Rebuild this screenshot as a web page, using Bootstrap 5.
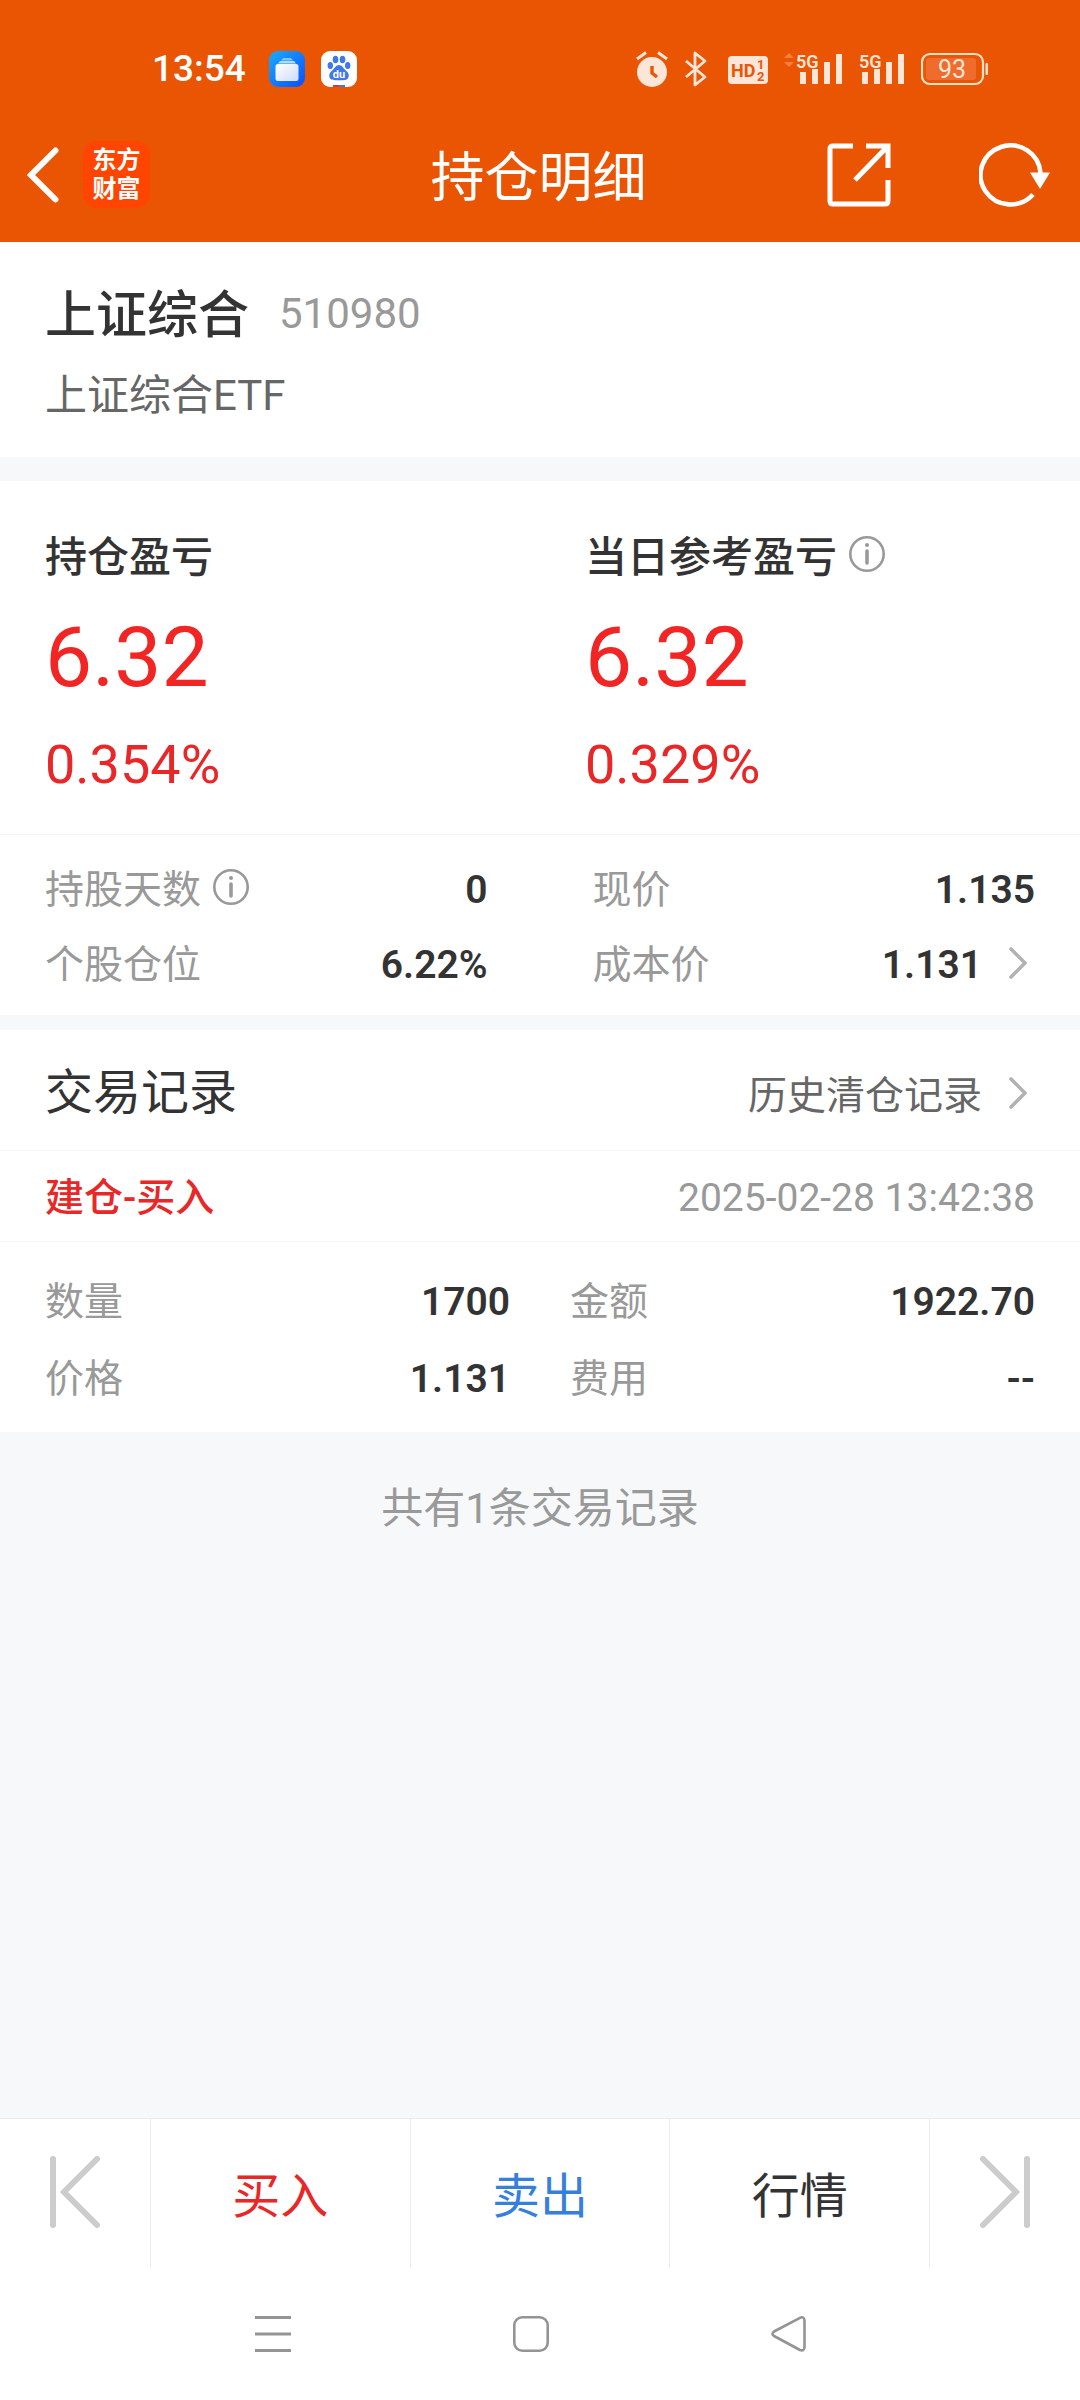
<!DOCTYPE html>
<html lang="zh-CN">
<head>
<meta charset="utf-8">
<meta name="viewport" content="width=device-width, initial-scale=1">
<title>持仓明细</title>
<link rel="stylesheet" href="https://cdn.jsdelivr.net/npm/bootstrap@5.3.0/dist/css/bootstrap.min.css">
<style>
  :root { --brand: #ea5504; --ink: #333; --soft: #666; --mute: #999; --up: #e82828; --down: #3680dc; --pane: #f7f8fa; --rule: #f5f5f5; }
  body { font-family: Roboto, "Noto Sans CJK SC", sans-serif; color: var(--ink); background: var(--pane); font-size: 39px; line-height: 60px; }
  svg { display: block; flex: none; }
  a { color: inherit; text-decoration: none; }
  button { color: inherit; }
  .brand-bg { background: var(--brand); }
  .ink-soft { color: var(--soft); }
  .ink-mute { color: var(--mute); }
  .ink-up { color: var(--up); }
  .ink-down { color: var(--down); }
  .figure-strong { font-weight: 600; }
  .status-strip { height: 110px; padding: 28px 92px 0 152px; }
  .clock { font-size: 37px; font-weight: 500; line-height: 42px; margin-right: 7px; }
  .status-group { gap: 16px; }
  .title-strip { height: 132px; padding: 0 30px 3px 27px; }
  .side { flex: 1 1 0; }
  .app-logo { width: 67px; height: 67px; border-radius: 14px; background: #ff4500; font-size: 24px; font-weight: 700; line-height: 29px; }
  .page-title { font-size: 54px; font-weight: 400; padding-top: 9px; line-height: 60px; }
  .pad-x { padding-left: 45px; padding-right: 45px; }
  .security { padding-top: 44px; padding-bottom: 36px; margin-bottom: 24px; }
  .security h2 { font-size: 51px; font-weight: 500; line-height: 60px; }
  .code { font-size: 42px; line-height: 56px; margin-left: 30px; }
  .fullname { font-size: 42px; line-height: 50px; margin-top: 25px; }
  .profit { padding: 47px 0 39px; border-bottom: 1px solid var(--rule); }
  .profit-cell { padding-left: 45px; }
  .profit h3 { font-size: 42px; font-weight: 500; line-height: 60px; }
  .amount { font-size: 84px; line-height: 84px; margin-top: 28px; color: #f12524; }
  .percent { font-size: 54px; line-height: 60px; margin-top: 35px; }
  .info-btn { margin-left: 12px; }
  .pairs { display: grid; grid-template-columns: 1fr 1fr; }
  .holding { column-gap: 105px; line-height: 75px; padding-top: 18px; padding-bottom: 12px; margin-bottom: 15px; }
  .deal { column-gap: 60px; line-height: 77px; padding-top: 22px; padding-bottom: 14px; }
  .go { gap: 27px; padding-right: 8px; }
  .go svg { margin-bottom: 6px; }
  .records-head { padding-top: 33px; padding-bottom: 24px; border-bottom: 1px solid var(--rule); }
  .records-head h3 { font-size: 48px; font-weight: 400; line-height: 60px; }
  .deal-head { padding-top: 4px; line-height: 86px; border-bottom: 1px solid var(--rule); }
  .deal-kind { font-weight: 500; }
  .total { font-size: 42px; padding-top: 47px; }
  .actions { height: 150px; border-top: 1px solid #ebebeb; }
  .actions button { background: none; font-size: 48px; line-height: 60px; padding: 6px 0 0; border-width: 0; }
  .actions button + button { border-left: 1px solid #ebebeb; }
  .actions .edge { width: 150px; padding: 0 0 4px; }
  .actions .last { width: 151px; }
  .system-nav { height: 132px; padding: 0 162px 0 144px; }
</style>
</head>
<body>
<div class="d-flex flex-column min-vh-100">
  <header class="brand-bg text-white">
    <div class="status-strip d-flex justify-content-between align-items-center">
      <div class="status-group d-flex align-items-center">
        <span class="clock">13:54</span>
        <svg width="36" height="36" viewBox="0 0 36 36" aria-hidden="true">
          <defs>
            <linearGradient id="blue" x1="0" y1="0" x2="1" y2="1"><stop offset="0" stop-color="#18adff"/><stop offset="1" stop-color="#0c4dff"/></linearGradient>
            <linearGradient id="card" x1="0" y1="0" x2="1" y2="1"><stop offset="0" stop-color="#fff"/><stop offset="1" stop-color="#cfdcff"/></linearGradient>
          </defs>
          <rect width="36" height="36" rx="9" fill="url(#blue)"/>
          <path d="M14 7h8l2 2.500H12z" fill="#7fc4ff"/><path d="M11 10h14l2 2.500H9z" fill="#b5dcff"/>
          <rect x="6.500" y="13" width="23" height="17" rx="2.500" fill="url(#card)"/>
        </svg>
        <svg width="36" height="36" viewBox="0 0 36 36" aria-hidden="true">
          <rect width="36" height="36" rx="9" fill="#fff"/>
          <g fill="#3f78e8"><ellipse cx="14.500" cy="8.500" rx="2.800" ry="3.800"/><ellipse cx="21.500" cy="8.500" rx="2.800" ry="3.800"/><ellipse cx="9.300" cy="14.500" rx="2.700" ry="3.500"/><ellipse cx="26.700" cy="14.500" rx="2.700" ry="3.500"/>
          <path d="M18 14c3 0 4 3 6.500 5.200 2.500 2.100 4 4 3 7-1 3-4 3-9.500 3s-8.500 0-9.500-3c-1-3 .5-4.900 3-7C14 17 15 14 18 14z"/></g>
          <text x="18" y="27" font-size="11" font-weight="700" fill="#fff" text-anchor="middle">du</text>
          <rect x="12" y="34" width="6" height="2" fill="#e03040"/><rect x="18" y="34" width="6" height="2" fill="#3f78e8"/>
        </svg>
      </div>
      <div class="status-group d-flex align-items-center">
        <svg width="32" height="36" viewBox="0 0 32 36" fill="none" stroke="#fde5d8" aria-hidden="true">
          <circle cx="16" cy="21" r="15" fill="#fde5d8" stroke="none"/><path d="M1 8l9-6.500M31 8l-9-6.500" stroke-width="3"/><path d="M16 15v7l5 4" stroke="#ea5504" stroke-width="3.400"/>
        </svg>
        <svg width="27" height="36" viewBox="0 0 27 36" fill="none" stroke="#fde5d8" stroke-width="2.800" stroke-linejoin="round" aria-hidden="true"><path d="M2 10l19 16-10 8V2l10 8L2 26"/></svg>
        <svg width="41" height="36" viewBox="0 0 41 36" aria-hidden="true">
          <rect x="1" y="5" width="40" height="28" rx="4" fill="#fde5d8"/>
          <g fill="#ea5504" font-weight="700"><text x="4" y="26" font-size="18">HD</text><text x="30" y="18" font-size="13">1</text><text x="30" y="30" font-size="13">2</text></g>
        </svg>
        <svg width="59" height="36" viewBox="0 0 59 36" fill="#fde5d8" aria-hidden="true">
          <path d="M0 7l5-5 5 5zM0 11h10l-5 5z" fill="#f5803e"/>
          <text x="12" y="17" font-size="18" font-weight="600">5G</text>
          <path d="M16 21h6v12h-6zM28 18h6v15h-6zM40 11h6v22h-6zM52 3h6v30h-6z"/>
        </svg>
        <svg width="46" height="36" viewBox="0 0 46 36" fill="#fde5d8" aria-hidden="true">
          <text x="0" y="17" font-size="18" font-weight="600">5G</text>
          <path d="M3 21h6v12H3zM15 18h6v15h-6zM27 11h6v22h-6zM39 3h6v30h-6z"/>
        </svg>
        <svg width="67" height="36" viewBox="0 0 67 36" aria-hidden="true">
          <rect x="1" y="3" width="61" height="30" rx="8" fill="none" stroke="#fde0c8" stroke-width="2.200"/>
          <rect x="5" y="7" width="50" height="22" rx="3" fill="#f06c2c"/><rect x="64.500" y="12" width="2.500" height="12" rx="1" fill="#fde0c8"/>
          <text x="31" y="27" font-size="25" fill="#fde5d8" text-anchor="middle">93</text>
        </svg>
      </div>
    </div>
    <nav class="title-strip d-flex align-items-center" aria-label="顶部导航">
      <div class="side d-flex align-items-center gap-4">
        <button type="button" class="btn p-0 border-0" aria-label="返回">
          <svg width="32" height="56" viewBox="0 0 32 56" fill="none" stroke="#fff" stroke-width="6" stroke-linecap="round"><path d="M28.500 3.500L4 28l24.500 24.500"/></svg>
        </button>
        <a href="#" class="app-logo d-flex align-items-center justify-content-center text-center">东方<br>财富</a>
      </div>
      <h1 class="page-title mb-0">持仓明细</h1>
      <div class="side d-flex align-items-center justify-content-end">
        <button type="button" class="btn p-0 border-0 me-4" aria-label="分享">
          <svg width="64" height="64" viewBox="0 0 64 64" fill="none" stroke="#fff" stroke-width="5"><path d="M26 3H6Q3 3 3 6v52q0 3 3 3h52q3 0 3-3V37M39 3h22v22M61 3L28 37"/></svg>
        </button>
        <button type="button" class="btn p-0 border-0 ms-3 ps-5" aria-label="刷新">
          <svg width="71" height="64" viewBox="0 0 71 64" fill="none" stroke="#fff" stroke-width="4.600"><path d="M61.500 30A30 29.500 0 1 0 54 51.500"/><path d="M51 29.500h20L61 46z" fill="#fff" stroke="none"/></svg>
        </button>
      </div>
    </nav>
  </header>

  <main class="flex-grow-1">
    <section class="security pad-x bg-white">
      <div class="d-flex align-items-start">
        <h2 class="mb-0">上证综合</h2>
        <span class="code ink-mute">510980</span>
      </div>
      <div class="fullname ink-soft">上证综合ETF</div>
    </section>

    <section class="profit row g-0 bg-white">
      <div class="profit-cell col-6">
        <h3 class="mb-0">持仓盈亏</h3>
        <div class="amount">6.32</div>
        <div class="percent ink-up">0.354%</div>
      </div>
      <div class="profit-cell col-6">
        <div class="d-flex align-items-center">
          <h3 class="mb-0">当日参考盈亏</h3>
          <button type="button" class="btn p-0 border-0 info-btn pb-2" aria-label="说明">
            <svg width="36" height="36" viewBox="0 0 36 36" fill="none" stroke="#999" stroke-width="2.600"><circle cx="18" cy="18" r="16.700"/><path d="M18 15v12" stroke-width="3.600" stroke-linecap="round"/><circle cx="18" cy="9" r="2" fill="#999" stroke="none"/></svg>
          </button>
        </div>
        <div class="amount">6.32</div>
        <div class="percent ink-up">0.329%</div>
      </div>
    </section>

    <section class="holding pairs pad-x bg-white">
      <div class="d-flex justify-content-between">
        <span class="ink-mute d-flex align-items-center">持股天数
          <button type="button" class="btn p-0 border-0 info-btn pb-2" aria-label="说明">
            <svg width="36" height="36" viewBox="0 0 36 36" fill="none" stroke="#999" stroke-width="2.600"><circle cx="18" cy="18" r="16.700"/><path d="M18 15v12" stroke-width="3.600" stroke-linecap="round"/><circle cx="18" cy="9" r="2" fill="#999" stroke="none"/></svg>
          </button>
        </span>
        <span class="figure-strong">0</span>
      </div>
      <div class="d-flex justify-content-between"><span class="ink-mute">现价</span><span class="figure-strong">1.135</span></div>
      <div class="d-flex justify-content-between"><span class="ink-mute">个股仓位</span><span class="figure-strong">6.22%</span></div>
      <a href="#" class="d-flex justify-content-between"><span class="ink-mute">成本价</span>
        <span class="go d-flex align-items-center figure-strong">1.131
          <svg width="18" height="32" viewBox="0 0 18 32" fill="none" stroke="#b2b2b2" stroke-width="3.600" stroke-linecap="round"><path d="M2 2l14 14L2 30"/></svg>
        </span>
      </a>
    </section>

    <section class="bg-white">
      <div class="records-head pad-x d-flex justify-content-between align-items-baseline">
        <h3 class="mb-0">交易记录</h3>
        <a href="#" class="go d-flex align-items-center ink-soft">历史清仓记录
          <svg width="18" height="32" viewBox="0 0 18 32" fill="none" stroke="#b2b2b2" stroke-width="3.600" stroke-linecap="round"><path d="M2 2l14 14L2 30"/></svg>
        </a>
      </div>
      <div class="deal-head pad-x d-flex justify-content-between">
        <span class="deal-kind ink-up">建仓-买入</span>
        <time class="ink-mute" datetime="2025-02-28T13:42:38">2025-02-28 13:42:38</time>
      </div>
      <div class="deal pairs pad-x">
        <div class="d-flex justify-content-between"><span class="ink-mute">数量</span><span class="figure-strong">1700</span></div>
        <div class="d-flex justify-content-between"><span class="ink-mute">金额</span><span class="figure-strong">1922.70</span></div>
        <div class="d-flex justify-content-between"><span class="ink-mute">价格</span><span class="figure-strong">1.131</span></div>
        <div class="d-flex justify-content-between"><span class="ink-mute">费用</span><span class="figure-strong">--</span></div>
      </div>
    </section>
    <p class="total text-center ink-mute mb-0">共有1条交易记录</p>
  </main>

  <footer class="bg-white">
    <div class="actions d-flex">
      <button type="button" class="edge d-flex align-items-center justify-content-center" aria-label="上一只">
        <svg width="50" height="72" viewBox="0 0 50 72" fill="none" stroke="#ccc" stroke-width="6" stroke-linecap="round"><path d="M3 3v66M47 3L14 36l33 33"/></svg>
      </button>
      <button type="button" class="side ink-up">买入</button>
      <button type="button" class="side ink-down">卖出</button>
      <button type="button" class="side">行情</button>
      <button type="button" class="edge last d-flex align-items-center justify-content-center" aria-label="下一只">
        <svg width="50" height="72" viewBox="0 0 50 72" fill="none" stroke="#ccc" stroke-width="6" stroke-linecap="round"><path d="M47 3v66M3 3l33 33L3 69"/></svg>
      </button>
    </div>
    <nav class="system-nav d-flex align-items-center" aria-label="系统导航">
      <button type="button" class="side btn p-0 border-0 d-flex justify-content-center" aria-label="最近任务">
        <svg width="36" height="36" viewBox="0 0 36 36" stroke="#949494" stroke-width="3"><path d="M0 1.500h36M0 18h36M0 34.500h36"/></svg>
      </button>
      <button type="button" class="side btn p-0 border-0 d-flex justify-content-center" aria-label="主屏幕">
        <svg width="36" height="36" viewBox="0 0 36 36" fill="none" stroke="#949494" stroke-width="2.600"><rect x="1.300" y="1.300" width="33.400" height="33.400" rx="8"/></svg>
      </button>
      <button type="button" class="side btn p-0 border-0 d-flex justify-content-center" aria-label="返回">
        <svg width="36" height="36" viewBox="0 0 36 36" fill="none" stroke="#949494" stroke-width="2.600" stroke-linejoin="round"><path d="M29 1.800L3 15.500Q0 18 3 20L29 34Q33.500 35.500 33.500 31V5Q33.500 0 29 1.800z"/></svg>
      </button>
    </nav>
  </footer>
</div>
<script src="https://cdn.jsdelivr.net/npm/bootstrap@5.3.0/dist/js/bootstrap.bundle.min.js"></script>
</body>
</html>
